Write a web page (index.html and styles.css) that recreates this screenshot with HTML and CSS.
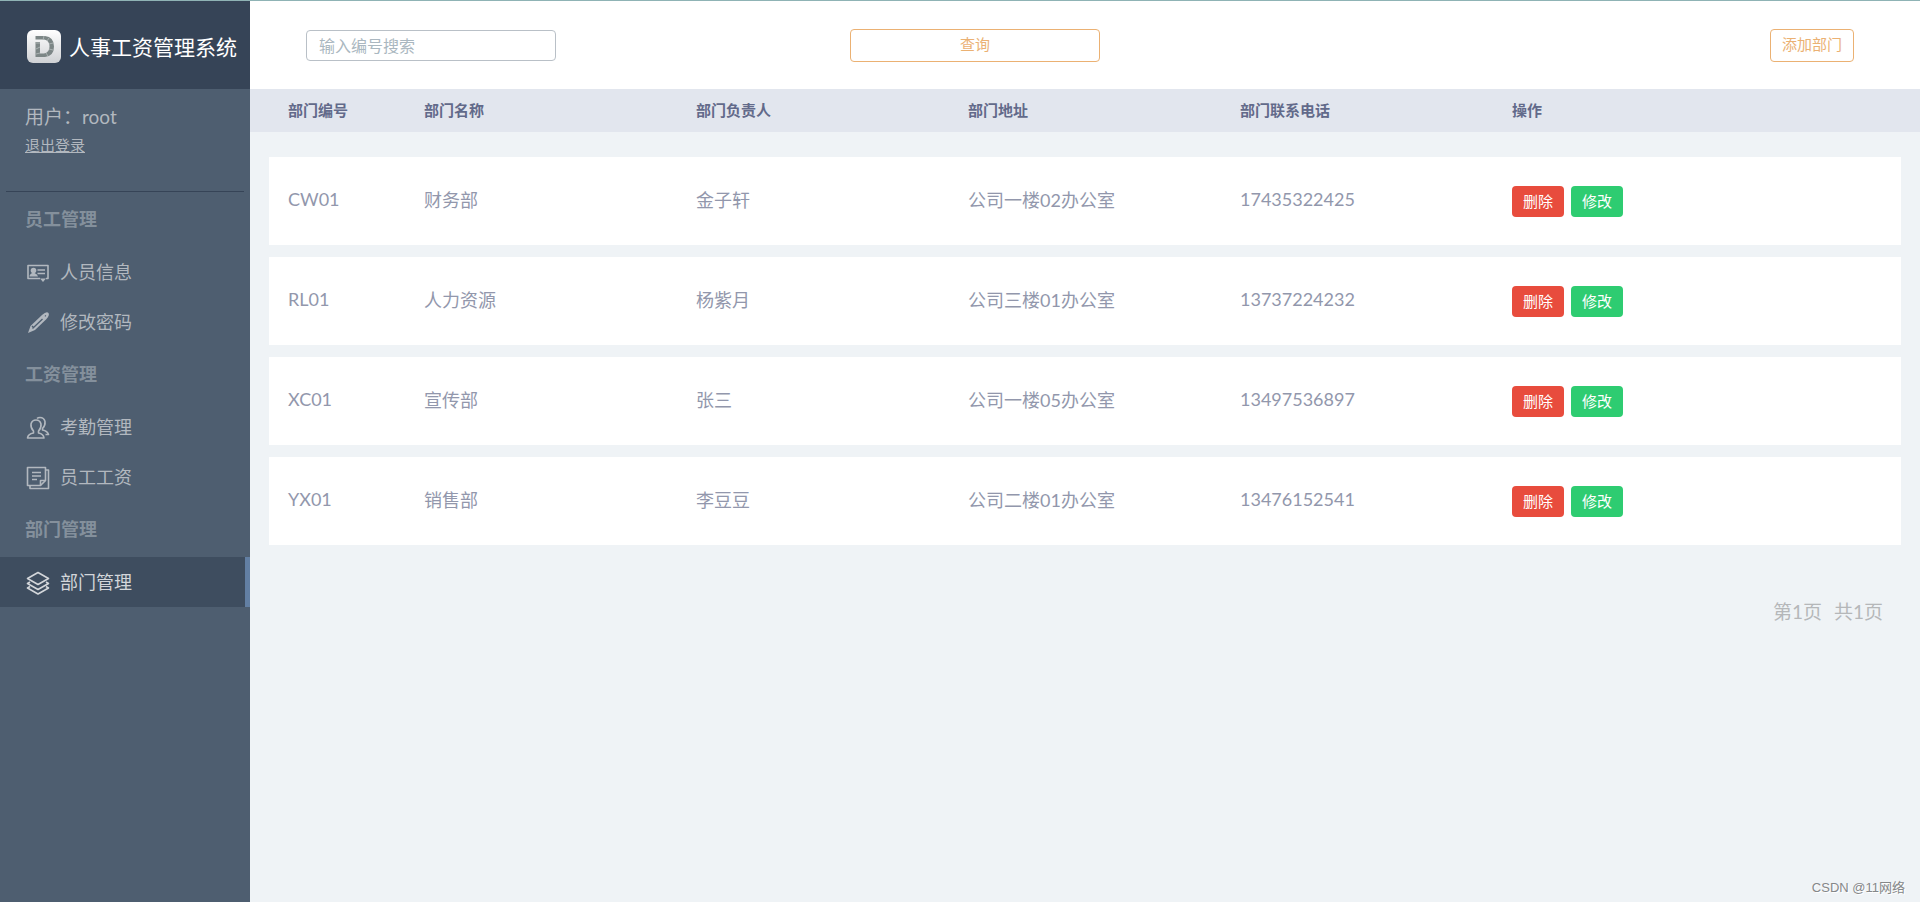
FILE: index.html
```html
<!DOCTYPE html>
<html lang="zh-CN">
<head>
<meta charset="utf-8">
<title>人事工资管理系统</title>
<link rel="stylesheet" href="styles.css">
</head>
<body>
<div class="app">
  <aside class="sidebar">
    <div class="brand">
      <svg class="brand-logo" viewBox="0 0 36 36" aria-hidden="true">
        <defs>
          <linearGradient id="tile" x1="0" y1="0" x2="0" y2="1"><stop offset="0" stop-color="#fff"/><stop offset="1" stop-color="#cfd1d4"/></linearGradient>
        </defs>
        <rect x="1" y="1" width="34" height="33" rx="6" fill="url(#tile)"/>
        <path d="M9.500 7h9.500q9 1 9 10.500t-9 10.500h-9.500v-15h4.500v11.500h4q5.500-1 5.500-7t-5.500-7h-8.500z" fill="#7c8686"/>
        <path d="M10 14h4M10 20l4-2M10 25l4-1M18 7l-1 4M23 9l-2 3M27 14l-4 1M27 21l-4-1M22 27l-2-3" stroke="#aab2b2" fill="none"/>
      </svg>
      <h1 class="brand-title">人事工资管理系统</h1>
    </div>
    <div class="user">
      <div class="user-name">用户：root</div>
      <a class="logout" href="#">退出登录</a>
    </div>
    <nav class="nav">
      <h2 class="nav-title">员工管理</h2>
      <a class="nav-item" href="#">
        <svg class="icon" viewBox="0 0 24 24" aria-hidden="true"><path d="M14 17.500H2v-13h20v13h-2" /><path d="M14 17.500h6l-3 3.500z" fill="currentColor" stroke="none"/><circle cx="7.500" cy="9.500" r="2.800" fill="currentColor" stroke="none"/><path d="M3.500 15.500q0-2.500 3-3.500h2q3 1 3.500 3.500z" fill="currentColor" stroke="none"/><path d="M11.500 9h7.500M11.500 12.500h7.500" stroke-width="1.400"/></svg>
        人员信息
      </a>
      <a class="nav-item" href="#">
        <svg class="icon" viewBox="0 0 24 24" aria-hidden="true"><path d="M2 22l2.500-7L16 4q4.500-4 6.500-2 1.500 2-2.500 6.500L9 19z" fill="currentColor" stroke="none"/><path d="M6.500 17.500L16.500 8M19 4.500l.8.800M6 15l2 2" stroke="#4e5e70" stroke-width="1.300"/></svg>
        修改密码
      </a>
      <h2 class="nav-title">工资管理</h2>
      <a class="nav-item" href="#">
        <svg class="icon" viewBox="0 0 24 24" aria-hidden="true"><path d="M7.500 15q-3-3-2.500-7 1-4 5-4t5 4q.5 4-2.500 7v2q5 1 5.500 5H1.500q.5-4 6-5z"/><path d="M11 2.500q1-1 3-1 4 0 5 4 .5 4-2.500 7v1.500q5 1 6 4.500h-3"/></svg>
        考勤管理
      </a>
      <a class="nav-item" href="#">
        <svg class="icon" viewBox="0 0 24 24" aria-hidden="true"><path d="M1.500 1.500h18v13l-5 5h-13z"/><path d="M19.500 14.500h-5v5M4 20v2.500h18.500V4H20"/><path d="M6 6.500h9M6 10h9M6 13.500h5"/></svg>
        员工工资
      </a>
      <h2 class="nav-title">部门管理</h2>
      <a class="nav-item active" href="#" aria-current="page">
        <svg class="icon" viewBox="0 0 24 24" aria-hidden="true"><path d="M12 1.500l10.500 6L12 13.500 1.500 7.500z"/><path d="M4 11l-2.500 1.500L12 18.500l10.500-6L20 11M4 15.500L1.500 17 12 23l10.500-6-2.500-1.500"/></svg>
        部门管理
      </a>
    </nav>
  </aside>

  <main class="main">
    <form class="toolbar">
      <input class="search" type="text" placeholder="输入编号搜索" aria-label="输入编号搜索">
      <button class="btn btn-outline btn-query" type="button">查询</button>
      <button class="btn btn-outline btn-add" type="button">添加部门</button>
    </form>
    <table class="table">
      <thead>
        <tr><th>部门编号</th><th>部门名称</th><th>部门负责人</th><th>部门地址</th><th>部门联系电话</th><th>操作</th></tr>
      </thead>
      <tbody>
        <tr><td>CW01</td><td>财务部</td><td>金子轩</td><td>公司一楼02办公室</td><td>17435322425</td><td class="actions"><button class="btn btn-danger" type="button">删除</button><button class="btn btn-success" type="button">修改</button></td></tr>
        <tr><td>RL01</td><td>人力资源</td><td>杨紫月</td><td>公司三楼01办公室</td><td>13737224232</td><td class="actions"><button class="btn btn-danger" type="button">删除</button><button class="btn btn-success" type="button">修改</button></td></tr>
        <tr><td>XC01</td><td>宣传部</td><td>张三</td><td>公司一楼05办公室</td><td>13497536897</td><td class="actions"><button class="btn btn-danger" type="button">删除</button><button class="btn btn-success" type="button">修改</button></td></tr>
        <tr><td>YX01</td><td>销售部</td><td>李豆豆</td><td>公司二楼01办公室</td><td>13476152541</td><td class="actions"><button class="btn btn-danger" type="button">删除</button><button class="btn btn-success" type="button">修改</button></td></tr>
      </tbody>
    </table>
    <div class="pager"><span>第1页</span><span>共1页</span></div>
    <footer class="credit">CSDN @11网络</footer>
  </main>
</div>
</body>
</html>
```
FILE: styles.css
```css
* {
  box-sizing: border-box;
}

body {
  margin: 0;
  background: #eff3f6;
  font-family: Lato, "Noto Sans CJK SC", sans-serif;
  font-size: 18px;
}

.app {
  display: flex;
  min-height: 100vh;
  border-top: 1px solid #8fb3b5;
}

.sidebar {
  flex: 0 0 250px;
  background: #4e5e70;
  color: #b2b8bf;
}

.brand {
  display: flex;
  align-items: center;
  gap: 7px;
  height: 88px;
  padding: 4px 0 0 26px;
  background: #364457;
}

.brand-logo {
  width: 36px;
  height: 36px;
}

.brand-title {
  margin: 0;
  padding-bottom: 3px;
  color: #fff;
  font-size: 21px;
  font-weight: 400;
  white-space: nowrap;
}

.user {
  height: 103px;
  margin: 0 6px;
  padding: 14px 19px 0;
  border-bottom: 1px solid #364457;
}

.user-name {
  font-size: 19px;
  line-height: 28px;
}

.logout {
  color: inherit;
  font-size: 15px;
  line-height: 28px;
}

.nav-title {
  margin: 0;
  padding-left: 25px;
  color: #84909c;
  font-size: 18px;
  font-weight: 700;
  line-height: 55px;
}

.nav-item {
  display: flex;
  align-items: center;
  gap: 10px;
  height: 50px;
  padding: 0 0 3px 26px;
  color: #b2b8bf;
  text-decoration: none;
}

.nav-item.active {
  border-right: 5px solid #627fa3;
  background: #3e4d5f;
  color: #d3d6da;
}

.icon {
  width: 24px;
  height: 24px;
  margin-top: 5px;
  fill: none;
  stroke: currentColor;
  stroke-width: 1.6;
  stroke-linejoin: round;
}

.main {
  display: flex;
  flex: 1;
  flex-direction: column;
}

.toolbar {
  display: grid;
  grid-template-columns: repeat(3, 1fr);
  align-items: center;
  height: 88px;
  padding: 0 19px;
  background: #fff;
}

.search,
.btn-query {
  width: 250px;
  margin-left: 37px;
}

.btn-add {
  justify-self: end;
  margin-right: 47px;
}

.search {
  height: 31px;
  padding: 0 12px;
  border: 1px solid #b9c0c7;
  border-radius: 4px;
  font: inherit;
  font-size: 16px;
}

.search::placeholder {
  color: #aab7c0;
}

.btn {
  padding: 0 10px;
  border: 1px solid transparent;
  border-radius: 4px;
  font: inherit;
  font-size: 15px;
  line-height: 29px;
}

.btn-outline {
  height: 33px;
  padding: 0 11px 2px;
  border-color: #ebb173;
  background: #fff;
  color: #ebb173;
}

.btn-danger {
  background: #e84c3d;
  color: #fff;
}

.btn-success {
  background: #2ecc71;
  color: #fff;
}

.table,
.table thead,
.table tbody {
  display: block;
}

.table tr {
  display: grid;
  grid-template-columns: 1fr 2fr 2fr 2fr 2fr 3fr;
  align-items: center;
}

.table th {
  padding: 0 19px;
  text-align: left;
}

.table td {
  padding: 0 19px 4px;
}

.table thead {
  padding: 0 19px;
  background: #e2e6ee;
}

.table th {
  color: #626a8a;
  font-size: 15px;
  font-weight: 700;
  line-height: 43px;
}

.table tbody {
  padding: 25px 19px 0;
}

.table tbody tr {
  height: 88px;
  margin-bottom: 12px;
  background: #fff;
  color: #9297ac;
}

.table .actions {
  display: flex;
  gap: 7px;
  padding-bottom: 0;
}

.pager {
  display: flex;
  justify-content: flex-end;
  gap: 12px;
  padding: 40px 37px 0;
  color: #b5b7b9;
  font-size: 19px;
}

.credit {
  margin-top: auto;
  padding: 0 15px 6px;
  color: #858789;
  font-family: "Liberation Sans", "Noto Sans CJK SC", sans-serif;
  font-size: 13px;
  text-align: right;
  text-shadow: 1px 1px 0 #fff;
}
```
